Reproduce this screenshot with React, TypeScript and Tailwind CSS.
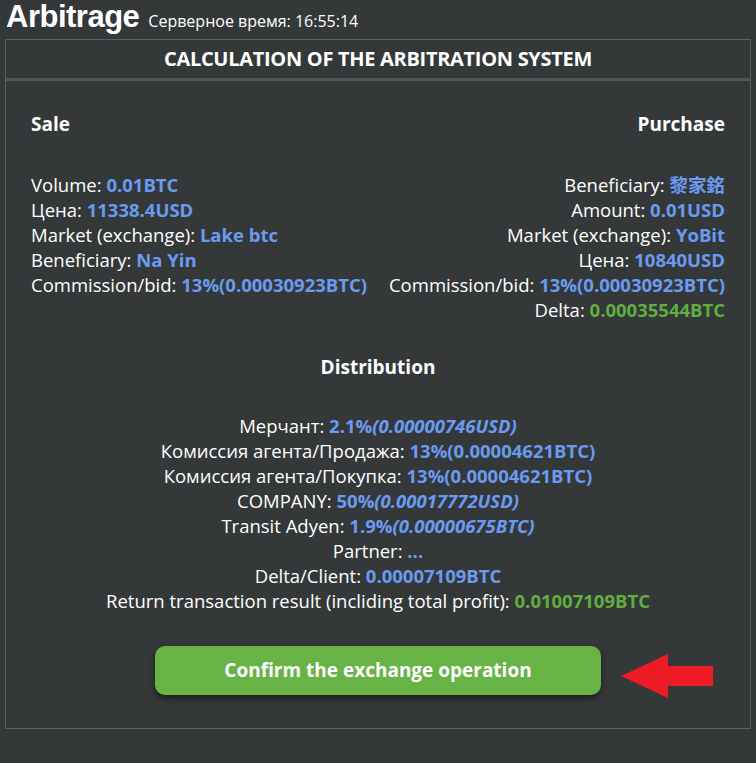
const blue = 'font-bold text-[#6a9bf0]';
const green = 'font-bold text-[#5fae3f]';

type Row = { label: string; value: React.ReactNode; cls?: string };

const sale: Row[] = [
  { label: 'Volume:', value: '0.01BTC' },
  { label: 'Цена:', value: '11338.4USD' },
  { label: 'Market (exchange):', value: 'Lake btc' },
  { label: 'Beneficiary:', value: 'Na Yin' },
  { label: 'Commission/bid:', value: '13%(0.00030923BTC)' },
];

const purchase: Row[] = [
  { label: 'Beneficiary:', value: '黎家銘' },
  { label: 'Amount:', value: '0.01USD' },
  { label: 'Market (exchange):', value: 'YoBit' },
  { label: 'Цена:', value: '10840USD' },
  { label: 'Commission/bid:', value: '13%(0.00030923BTC)' },
  { label: 'Delta:', value: '0.00035544BTC', cls: green },
];

const Pct = ({ p, v }: { p: string; v: string }) => (
  <span className={blue}>
    {p}
    <i>{v}</i>
  </span>
);

const distribution: Row[] = [
  { label: 'Мерчант:', value: <Pct p="2.1%" v="(0.00000746USD)" /> },
  { label: 'Комиссия агента/Продажа:', value: '13%(0.00004621BTC)' },
  { label: 'Комиссия агента/Покупка:', value: '13%(0.00004621BTC)' },
  { label: 'COMPANY:', value: <Pct p="50%" v="(0.00017772USD)" /> },
  { label: 'Transit Adyen:', value: <Pct p="1.9%" v="(0.00000675BTC)" /> },
  { label: 'Partner:', value: '...' },
  { label: 'Delta/Client:', value: '0.00007109BTC' },
  { label: 'Return transaction result (incliding total profit):', value: '0.01007109BTC', cls: green },
];

const Line = ({ row }: { row: Row }) => (
  <div className="h-[25px] leading-[25px] whitespace-nowrap">
    {row.label} <span className={row.cls ?? blue}>{row.value}</span>
  </div>
);

export default function App() {
  return (
    <div
      className="min-h-[763px] w-[756px] bg-[#353839] text-white text-[18.5px]"
      style={{ fontFamily: '"Open Sans", "Noto Sans CJK TC", sans-serif' }}
    >
      {/* top heading */}
      <div className="flex items-baseline gap-[9px] px-[6px] h-[39px]">
        <span className="text-[31px] leading-[34px] font-bold tracking-[-0.5px]" style={{ fontFamily: '"Liberation Sans", sans-serif' }}>
          Arbitrage
        </span>
        <span className="text-[16px]">Серверное время: 16:55:14</span>
      </div>

      <div className="mx-[5px] border border-[#5b5e5f]">
        <div className="h-[41px] flex items-center justify-center text-[20px] font-bold tracking-[-0.3px] border-b-[3px] border-[#525556]">
          CALCULATION OF THE ARBITRATION SYSTEM
        </div>

        <div className="px-[25px] pt-[30px]">
          <div className="flex justify-between">
            <div className="text-[19px] font-bold leading-[26px]">Sale</div>
            <div className="text-[19px] font-bold leading-[26px]">Purchase</div>
          </div>
          <div className="flex justify-between mt-[35px]">
            <div>
              {sale.map((r) => (
                <Line key={r.label} row={r} />
              ))}
            </div>
            <div className="text-right">
              {purchase.map((r) => (
                <Line key={r.label} row={r} />
              ))}
            </div>
          </div>
        </div>

        <div className="text-center mt-[32px] text-[19px] font-bold leading-[26px]">Distribution</div>
        <div className="text-center mt-[33px]">
          {distribution.map((r) => (
            <Line key={r.label} row={r} />
          ))}
        </div>

        <div className="relative flex justify-center mt-[33px] mb-[33px]">
          <button className="w-[446px] h-[49px] rounded-[10px] bg-[#67b346] text-[19px] font-bold shadow-[0_3px_6px_rgba(0,0,0,0.5)]">
            Confirm the exchange operation
          </button>
          <svg className="absolute left-[614px] top-[8px]" width="94" height="44" viewBox="0 0 94 44">
            <path d="M1 22 L48 0 L48 12 L93 12 L93 32 L48 32 L48 44 Z" fill="#ed1c24" />
          </svg>
        </div>
      </div>
    </div>
  );
}
